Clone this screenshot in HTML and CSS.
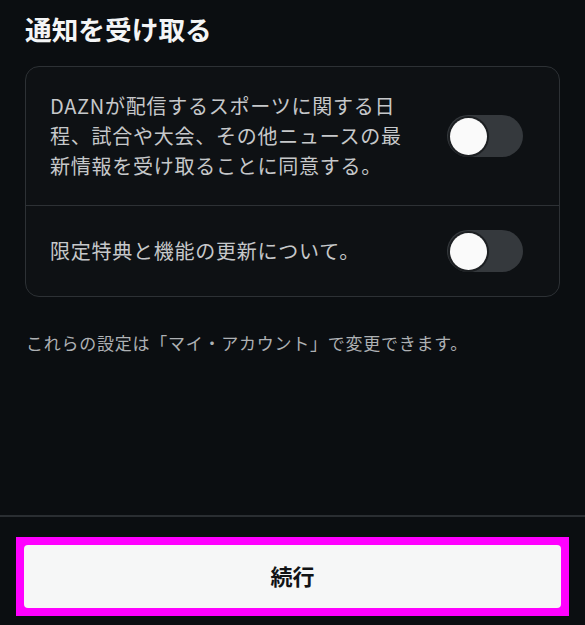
FILE: index.html
```html
<!DOCTYPE html>
<html lang="ja">
<head>
<meta charset="utf-8">
<link rel="stylesheet" href="styles.css">
</head>
<body>
<div class="page">
  <main class="content">
    <h1 class="title">通知を受け取る</h1>
    <div class="card">
      <div class="row">
        <p class="row-text">DAZNが配信するスポーツに関する日<br>程、試合や大会、その他ニュースの最<br>新情報を受け取ることに同意する。</p>
        <span class="toggle"><span class="knob"></span></span>
      </div>
      <div class="row row-second">
        <p class="row-text">限定特典と機能の更新について。</p>
        <span class="toggle"><span class="knob"></span></span>
      </div>
    </div>
    <p class="note">これらの設定は「マイ・アカウント」で変更できます。</p>
  </main>
  <footer class="footer">
    <div class="highlight">
      <button class="continue">続行</button>
    </div>
  </footer>
</div>
</body>
</html>
```
FILE: styles.css
```css
html, body {
  margin: 0;
  padding: 0;
  background: #0b0e11;
}
body {
  font-family: "Noto Sans CJK JP", "Noto Sans", sans-serif;
  color: #f2f3f4;
}
.page {
  height: 625px;
  display: flex;
  flex-direction: column;
}
.content {
  flex: 1;
  padding: 0 25px 0 25px;
}
.title {
  margin: 10px 0 0 0;
  font-size: 26.7px;
  line-height: 38px;
  font-weight: 700;
  color: #f4f5f6;
}
.card {
  margin-top: 18px;
  border: 1px solid #2d3135;
  border-radius: 14px;
  background: #0e1114;
  width: 533px;
}
.row {
  display: flex;
  align-items: center;
  justify-content: space-between;
  padding: 24px 36px 24px 24px;
}
.row-second {
  border-top: 1px solid #2d3135;
}
.row-text {
  margin: 0;
  font-size: 20px;
  line-height: 30px;
  letter-spacing: 0.75px;
  color: #c6c8ca;
}
.toggle {
  flex: none;
  width: 76px;
  height: 42px;
  border-radius: 21px;
  background: #35393d;
  display: flex;
  align-items: center;
  padding-left: 3px;
  box-sizing: border-box;
}
.knob {
  width: 37px;
  height: 37px;
  border-radius: 50%;
  background: #fafafa;
  box-shadow: 0 0 0 2px #1c1f22, 0 1px 2px rgba(0,0,0,0.6);
}
.note {
  margin: 34px 0 0 1px;
  font-size: 17px;
  line-height: 24px;
  letter-spacing: 0.75px;
  color: #aeb1b4;
}
.footer {
  border-top: 2px solid #2a2e32;
  padding: 20px 16px 9px 16px;
}
.highlight {
  background: #ff00ff;
  padding: 8px;
}
.continue {
  display: block;
  width: 100%;
  height: 63px;
  padding: 0 0 3px 0;
  border: none;
  border-radius: 4px;
  background: #f6f7f7;
  font-family: "Noto Sans CJK JP", "Noto Sans", sans-serif;
  font-size: 22px;
  font-weight: 700;
  color: #111315;
}
```
